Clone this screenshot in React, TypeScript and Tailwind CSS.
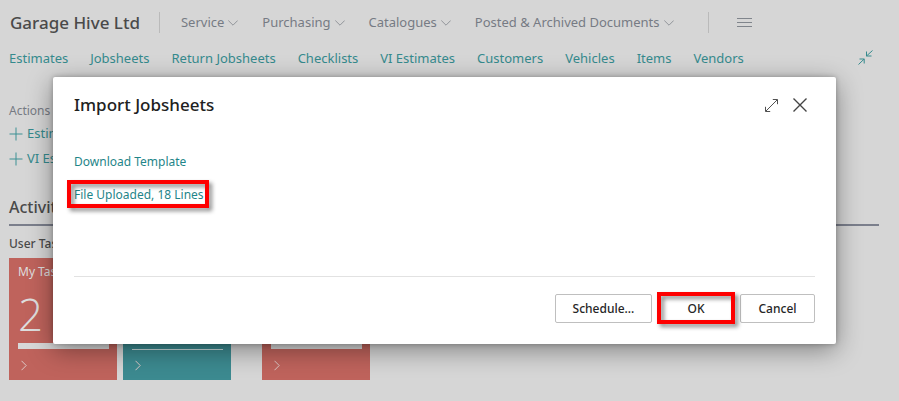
import type { ReactNode } from "react";

const menus = ["Service", "Purchasing", "Catalogues", "Posted & Archived Documents"];

const links = [
  "Estimates",
  "Jobsheets",
  "Return Jobsheets",
  "Checklists",
  "VI Estimates",
  "Customers",
  "Vehicles",
  "Items",
  "Vendors",
];

const actions = ["Estimate", "VI Estimate"];

function ChevronDown() {
  return (
    <svg width="10" height="6" viewBox="0 0 10 6" fill="none" stroke="#92959a" aria-hidden="true">
      <path d="M0.3 0.5 L5 5.2 L9.7 0.5" />
    </svg>
  );
}

function Plus() {
  return (
    <svg className="shrink-0" width="14" height="14" viewBox="0 0 14 14" fill="none" stroke="#3d9194" aria-hidden="true">
      <path d="M7 0.5v13M0.5 7h13" />
    </svg>
  );
}

function Tile({ className, title, value, bar }: { className: string; title: string; value: string; bar: string }) {
  return (
    <button type="button" className={`flex h-[122px] w-[108px] flex-col px-[9px] text-left text-[#dedede] ${className}`}>
      <span className="mt-1 text-xs leading-5 whitespace-nowrap">{title}</span>
      <span className="h-[60px] font-['Open_Sans','Noto_Sans',sans-serif] text-[44px] leading-[64px] font-light">{value}</span>
      <span className={`block w-[91px] ${bar}`} />
      <svg className="mt-auto mb-[9px] ml-[3px]" width="6" height="11" viewBox="0 0 6 11" fill="none" stroke="#dcc8c6" aria-hidden="true">
        <path d="M0.5 0.8 L5.2 5.5 L0.5 10.2" />
      </svg>
    </button>
  );
}

function Highlight({ children }: { children: ReactNode }) {
  return <div className="relative">{children}</div>;
}

export default function App() {
  return (
    <div className="relative min-h-screen overflow-hidden bg-[#d6d6d6] font-['Noto_Sans','Open_Sans',sans-serif] text-[13px] text-[#4a4a4a]">
      <header className="flex h-[45px] items-center pl-[10px]">
        <h1 className="text-[17px] font-medium whitespace-nowrap">Garage Hive Ltd</h1>
        <span className="ml-[19px] h-[21px] w-px bg-[#bababa]" />
        <nav className="ml-[21px] flex gap-6">
          {menus.map((m) => (
            <button key={m} type="button" className="flex items-center gap-1 whitespace-nowrap text-[#767b84]">
              {m}
              <ChevronDown />
            </button>
          ))}
        </nav>
        <span className="ml-[34px] h-[21px] w-px bg-[#bababa]" />
        <button type="button" aria-label="More" className="ml-7">
          <svg width="15" height="9" viewBox="0 0 15 9" fill="none" stroke="#80858c" aria-hidden="true">
            <path d="M0 0.5h15M0 4.5h15M0 8.5h15" />
          </svg>
        </button>
      </header>

      <div className="flex h-7 items-center justify-between pr-[26px] pl-[9px]">
        <nav className="flex gap-[22px]">
          {links.map((l) => (
            <a key={l} href="#" className="whitespace-nowrap text-[#358a8d]">
              {l}
            </a>
          ))}
        </nav>
        <button type="button" aria-label="Collapse" className="pb-1">
          <svg width="15" height="15" viewBox="0 0 15 15" fill="none" stroke="#358a8d" aria-hidden="true">
            <path d="M14.5 0.5 L8.5 6 M8.5 1.5 V6 H13.5 M0.5 14.5 L6.2 9 M1.5 9 H6.2 V13.5" />
          </svg>
        </button>
      </div>

      <main className="px-[9px] pt-7">
        <p className="text-xs leading-5 text-[#767b84]">Actions</p>
        <ul>
          {actions.map((a) => (
            <li key={a}>
              <button type="button" className="flex h-[25px] items-center gap-1 whitespace-nowrap text-[#358a8d]">
                <Plus />
                {a}
              </button>
            </li>
          ))}
        </ul>
        <h2 className="mt-6 mr-[11px] h-[31px] border-b-2 border-[#7b7f8c] text-base leading-6 font-medium">Activities</h2>
        <h3 className="mt-2 text-xs leading-5 font-medium">User Tasks</h3>
        <div className="mt-1 flex gap-[6px]">
          <Tile className="bg-[#bf635c]" title="My Tasks" value="2" bar="mt-px h-[6px] bg-[#d8d8d8]" />
          <Tile className="bg-[#3c8a90]" title="Open Tasks" value="0" bar="mt-[7px] h-px bg-[#c4d8d9]" />
          <Tile className="ml-[25px] bg-[#bf635c]" title="Overdue" value="0" bar="mt-px h-[6px] bg-[#d8d8d8]" />
        </div>
      </main>

      <section
        role="dialog"
        aria-labelledby="dialog-title"
        className="absolute top-[77px] right-[63px] left-[53px] rounded-xs bg-white px-[21px] pb-[21px] shadow-[0_6px_26px_rgba(0,0,0,0.4),0_0_5px_rgba(0,0,0,0.25)]"
      >
        <div className="flex items-center justify-between pt-[14px] pr-2">
          <h2 id="dialog-title" className="text-[17px] leading-7 font-medium text-[#212121]">
            Import Jobsheets
          </h2>
          <div className="flex items-center gap-[15px]">
            <button type="button" aria-label="Expand">
              <svg width="13" height="13" viewBox="0 0 13 13" fill="none" stroke="#505050" aria-hidden="true">
                <path d="M0.8 12.2 L12.2 0.8 M7.8 0.5 H12.5 V5.2 M0.5 7.8 V12.5 H5.2" />
              </svg>
            </button>
            <button type="button" aria-label="Close">
              <svg width="14" height="14" viewBox="0 0 14 14" fill="none" stroke="#444444" strokeWidth="1.4" aria-hidden="true">
                <path d="M0.5 0.5 L13.5 13.5 M13.5 0.5 L0.5 13.5" />
              </svg>
            </button>
          </div>
        </div>

        <div className="flex flex-col items-start gap-[13px] border-b border-[#e2e2e2] pt-[33px] pb-[71px] text-xs leading-5 text-[#1f8589]">
          <a href="#">Download Template</a>
          <Highlight>
            <a href="#">File Uploaded, 18 Lines</a>
            <span className="pointer-events-none absolute -top-[5px] -right-[5px] -bottom-[3px] -left-[7px] border-4 border-[#fe0000] drop-shadow-[3px_3px_2px_rgba(0,0,0,0.45)]" />
          </Highlight>
        </div>

        <div className="flex justify-end gap-[5px] pt-[17px] text-xs font-medium text-[#262626]">
          <button type="button" className="h-[29px] w-[97px] rounded-xs border border-[#bfbfbf]">
            Schedule...
          </button>
          <Highlight>
            <button type="button" className="h-[29px] w-[78px] rounded-xs border border-[#bfbfbf]">
              OK
            </button>
            <span className="pointer-events-none absolute inset-x-0 -top-[2px] -bottom-px border-4 border-[#fe0000] drop-shadow-[3px_3px_2px_rgba(0,0,0,0.45)]" />
          </Highlight>
          <button type="button" className="h-[29px] w-[75px] rounded-xs border border-[#bfbfbf]">
            Cancel
          </button>
        </div>
      </section>
    </div>
  );
}
